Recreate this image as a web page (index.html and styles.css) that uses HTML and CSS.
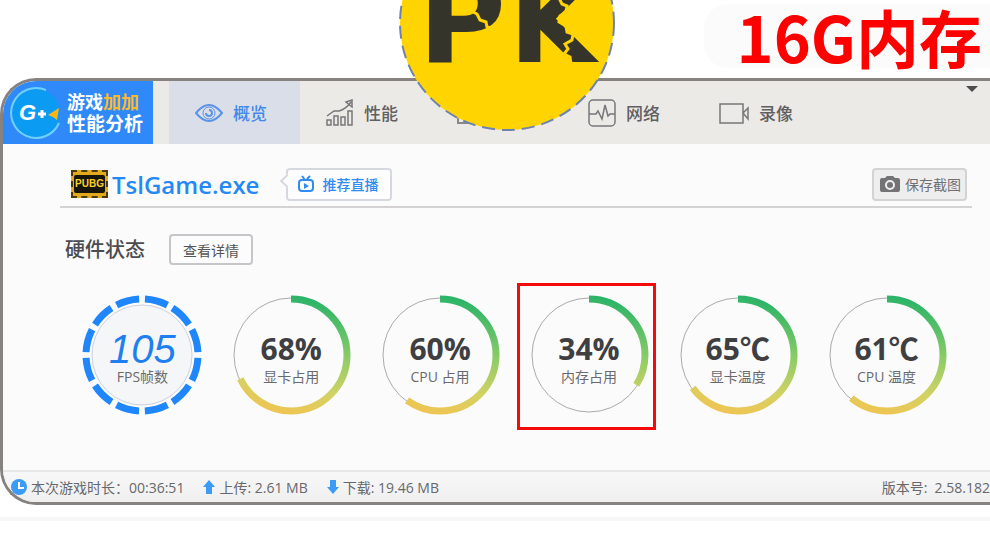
FILE: index.html
```
<!DOCTYPE html>
<html lang="zh-CN">
<head>
  <meta charset="UTF-8">
  <meta name="viewport" content="width=device-width, initial-scale=1.0">
  <title>游戏加加 性能分析</title>
  <link rel="stylesheet" href="styles.css">
</head>
<body>
  <header class="promo">
    <h1>16G内存</h1>
  </header>

  <div class="pk-badge">
    <svg viewBox="0 0 216 216" width="216" height="216">
      <circle cx="108" cy="108" r="107" fill="#ffd400"/>
      <circle cx="108" cy="108" r="107" fill="none" stroke="#6f82ad" stroke-width="2" stroke-dasharray="13 7"/>
      <text class="pk-text pk-p" x="19" y="147">P</text>
      <text class="pk-text" x="110" y="147">K</text>
      <g fill="none" stroke="#ffd400" stroke-width="3">
        <path d="M72 96l6 3 3 6 6 2 1 5 6 1 3 6"/>
        <path d="M160 83l3 6 5 2-1 6-6 4-1 6 7 4 1 6 6 2-1 6-7 4 3 5-4 5 6 3 1 8"/>
      </g>
    </svg>
  </div>

  <main class="window">
    <div class="topbar">
      <div class="brand">
        <svg width="54" height="54" viewBox="0 0 54 54">
          <circle cx="27" cy="27" r="24" fill="#0c9bf2"/>
          <path d="M37 4A25 25 0 1 0 50 37" fill="none" stroke="#6fd0fb" stroke-width="2"/>
          <text class="brand-g" x="10" y="34">G</text>
          <path d="M29 28h8M33 24v8" stroke="#fff" stroke-width="3"/>
          <path d="M39 29l11-7-2 12-4-3z" fill="#fdb515"/>
        </svg>
        <div class="brand-name">
          <div class="brand-top">游戏<span>加加</span></div>
          <div class="brand-bottom">性能分析</div>
        </div>
      </div>
      <nav class="tabs">
        <button class="tab active">
          <svg width="28" height="28" viewBox="0 0 28 28" fill="none" stroke="#5b93e6" stroke-width="2">
            <path d="M1 14Q14-2 27 14Q14 30 1 14z"/>
            <circle cx="14" cy="14" r="6" stroke-width="1"/>
            <path d="M14 11a3 3 0 1 1-3 3"/>
          </svg>
          概览
        </button>
        <button class="tab">
          <svg width="28" height="28" viewBox="0 0 28 28" fill="none" stroke="#77777a" stroke-width="1.500">
            <path d="M1 17L8 12H13Q20 10 25 3M20 3l6-2v7z"/>
            <path d="M1 21h4v5H1zM8 17h4v9H8zM15 18h4v8h-4zM22 12h4v14h-4z"/>
          </svg>
          性能
        </button>
        <button class="tab" aria-label="more">
          <svg width="28" height="28" viewBox="0 0 28 28" fill="none" stroke="#88888a" stroke-width="2">
            <path d="M1 5h26v19H1z"/>
          </svg>
        </button>
        <button class="tab">
          <svg width="28" height="28" viewBox="0 0 28 28" fill="none" stroke="#77777a" stroke-width="1.500">
            <rect x="1" y="1" width="26" height="26" rx="4"/>
            <path d="M1 15h7l2-3 4 8 3-14 3 11 2-2h5"/>
          </svg>
          网络
        </button>
        <button class="tab">
          <svg width="30" height="28" viewBox="0 0 30 28" fill="none" stroke="#77777a" stroke-width="1.500">
            <path d="M1 5h23v19H1zM24 14l5-5v11z"/>
          </svg>
          录像
        </button>
      </nav>
      <span class="caret"></span>
    </div>

    <div class="content">
      <section class="game">
        <span class="game-icon"><b>PUBG</b></span>
        <h2>TslGame.exe</h2>
        <button class="live">
          <svg width="16" height="18" viewBox="0 0 16 18" fill="none" stroke="#2f8cf0" stroke-width="2">
            <rect x="1" y="5" width="14" height="11" rx="3"/>
            <path d="M4 1l3 4M12 1L9 4"/>
            <path d="M6 8l5 3-5 3z" fill="#2f8cf0" stroke="none"/>
          </svg>
          推荐直播
        </button>
        <button class="save">
          <svg width="20" height="16" viewBox="0 0 20 16">
            <path d="M2 2h3l2-2h6l2 2h3q2 0 2 2v10q0 2-2 2H2q-2 0-2-2V4q0-2 2-2z" fill="#737376"/>
            <circle cx="10" cy="9" r="4" fill="#737376" stroke="#eee" stroke-width="2"/>
          </svg>
          保存截图
        </button>
      </section>

      <section class="status">
        <h3>硬件状态</h3>
        <button>查看详情</button>
      </section>

      <section class="gauges" id="gauges">
        <div class="gauge fps">
          <svg viewBox="0 0 120 120" width="120" height="120">
            <circle cx="60" cy="60" r="50" fill="#f5f6f8" stroke="#cdd0de"/>
            <circle cx="60" cy="60" r="56" fill="none" stroke="#1f87fb" stroke-width="7" pathLength="120" stroke-dasharray="8 2" transform="rotate(-87 60 60)"/>
          </svg>
          <strong>105</strong>
          <span>FPS帧数</span>
        </div>
      </section>
    </div>

    <footer class="statusbar">
      <svg width="16" height="16" viewBox="0 0 16 16">
        <circle cx="8" cy="8" r="8" fill="#3b9bf5"/>
        <path d="M8 3v6h5" fill="none" stroke="#fff" stroke-width="2"/>
      </svg>
      <span class="played">本次游戏时长：00:36:51</span>
      <svg width="12" height="16" viewBox="0 0 12 16"><path d="M6 1l6 7H9v7H3V8H0z" fill="#3b9bf5"/></svg>
      <span class="upload">上传: 2.61 MB</span>
      <svg width="12" height="16" viewBox="0 0 12 16"><path d="M6 15l6-7H9V1H3v7H0z" fill="#3b9bf5"/></svg>
      <span>下载: 19.46 MB</span>
      <span class="version">版本号:&nbsp; 2.58.182</span>
    </footer>
  </main>
  <div class="divider"></div>

  <svg width="0" height="0" class="defs">
    <defs>
      <linearGradient id="heat" gradientUnits="userSpaceOnUse" x1="70" y1="0" x2="45" y2="120">
        <stop offset="0" stop-color="#27b368"/>
        <stop offset="0.45" stop-color="#92cd66"/>
        <stop offset="0.75" stop-color="#d3d264"/>
        <stop offset="1" stop-color="#f2c350"/>
      </linearGradient>
    </defs>
  </svg>

  <script>
    const gauges = [
      { value: 68, unit: '%', label: '显卡占用' },
      { value: 60, unit: '%', label: 'CPU 占用' },
      { value: 34, unit: '%', label: '内存占用', marked: true },
      { value: 65, unit: '℃', label: '显卡温度' },
      { value: 61, unit: '℃', label: 'CPU 温度' }
    ];

    const container = document.getElementById('gauges');
    gauges.forEach(item => {
      const div = document.createElement('div');
      div.className = item.marked ? 'gauge marked' : 'gauge';
      // the arc starts at 12 o'clock and runs clockwise
      div.innerHTML = `
        <svg viewBox="0 0 120 120" width="120" height="120" fill="none">
          <circle cx="60" cy="60" r="57" stroke="#aaa"/>
          <path d="M60 4A56 56 0 0 1 60 116A56 56 0 0 1 60 4" stroke="url(#heat)" stroke-width="7" pathLength="100" stroke-dasharray="${item.value} 100"/>
        </svg>
        <strong>${item.value}${item.unit}</strong>
        <span>${item.label}</span>
      `;
      container.appendChild(div);
    });
  </script>
</body>
</html>
```
FILE: styles.css
```
* {
  box-sizing: border-box;
}
body {
  margin: 0;
  position: relative;
  overflow-x: hidden;
  background: #fff;
  color: #555;
  font-family: "Open Sans", "Noto Sans CJK SC", sans-serif;
  font-size: 14px;
}
h1, h2, h3 {
  margin: 0;
}
button {
  font: inherit;
  color: inherit;
  white-space: nowrap;
}
svg {
  flex: none;
}
.promo {
  display: flex;
  justify-content: flex-end;
  padding: 4px 0 10px;
}
.promo h1 {
  padding: 0 8px 0 32px;
  border-radius: 24px 0 0 24px;
  background: #fbfbfb;
  color: #fe0000;
  font-family: "Noto Sans CJK SC", sans-serif;
  font-size: 63px;
  line-height: 64px;
}
.pk-badge {
  position: absolute;
  z-index: 2;
  top: -85px;
  left: 51%;
  margin-left: -106px;
}
.pk-badge svg {
  display: block;
}
.pk-text {
  font-family: "DejaVu Sans", sans-serif;
  font-size: 112px;
  font-weight: bold;
  fill: #34342a;
}
.pk-p {
  font-size: 120px;
}
.window {
  border: 3px solid #85827f;
  border-right: 0;
  border-radius: 36px 0 0 36px;
  background: #fbfbfb;
  overflow: hidden;
}
.topbar {
  display: flex;
  position: relative;
  height: 63px;
  background: #eceae6;
}
.brand {
  display: flex;
  align-items: center;
  gap: 4px;
  width: 150px;
  padding-left: 6px;
  background: #2f89f8;
  color: #fff;
  font-weight: bold;
}
.brand-g {
  font-family: "Liberation Sans", sans-serif;
  font-size: 22px;
  font-style: italic;
  fill: #fff;
}
.brand-top {
  font-size: 18px;
  line-height: 22px;
}
.brand-top span {
  color: #fdb92c;
}
.brand-bottom {
  font-size: 19px;
  line-height: 22px;
}
.tabs {
  display: flex;
  margin-left: 16px;
}
.tab {
  display: flex;
  align-items: center;
  gap: 10px;
  width: 131px;
  padding: 0 0 0 26px;
  border: 0;
  background: none;
  color: #606062;
  font-size: 17px;
  font-weight: 500;
}
.tab.active {
  background: #d9dee8;
  color: #4188e8;
}
.caret {
  position: absolute;
  top: 5px;
  right: 12px;
  border: 6px solid transparent;
  border-top-color: #4c4c4c;
  border-bottom: 0;
}
.content {
  padding: 18px 18px 40px 57px;
}
.game {
  display: flex;
  align-items: center;
  height: 46px;
  padding: 0 5px 0 11px;
  border-bottom: 2px solid #d5d2d4;
}
.game-icon {
  display: flex;
  align-items: center;
  justify-content: center;
  width: 37px;
  height: 28px;
  border: 2px dashed #4a3a0c;
  background: #e3a91c;
}
.game-icon b {
  padding: 0 1px;
  border-radius: 2px;
  background: #17140c;
  color: #f8d12c;
  font-family: "Liberation Sans", sans-serif;
  font-size: 10px;
  line-height: 18px;
}
.game h2 {
  margin-left: 4px;
  color: #2389f5;
  font-size: 24px;
  font-weight: 600;
}
.live {
  display: flex;
  align-items: center;
  gap: 8px;
  position: relative;
  height: 33px;
  margin-left: 27px;
  padding: 0 12px 0 10px;
  border: 2px solid #d6d8e0;
  border-radius: 4px;
  background: #fdfdfd;
  color: #2f8cf0;
  font-weight: 500;
}
.live::before {
  content: "";
  position: absolute;
  top: 6px;
  left: -6px;
  width: 8px;
  height: 8px;
  border: solid #d6d8e0;
  border-width: 0 0 2px 2px;
  background: #fdfdfd;
  transform: rotate(45deg);
}
.save {
  display: flex;
  align-items: center;
  gap: 5px;
  height: 33px;
  margin-left: auto;
  padding: 0 4px 0 6px;
  border: 2px solid #d3d3d6;
  border-radius: 4px;
  background: #eeeeef;
  color: #707074;
}
.status {
  display: flex;
  align-items: center;
  gap: 24px;
  margin-top: 26px;
  padding-left: 5px;
}
.status h3 {
  color: #4c4c50;
  font-size: 20px;
  font-weight: 500;
  line-height: 30px;
}
.status button {
  height: 31px;
  padding: 0 12px;
  border: 2px solid #c6c6ca;
  border-radius: 4px;
  background: #fcfcfc;
}
.gauges {
  display: grid;
  grid-template-columns: repeat(6, 1fr);
  margin: 18px 11px 0 8px;
}
.gauge {
  display: grid;
  position: relative;
  grid-template-rows: 36px 36px 20px 28px;
  justify-items: center;
  padding: 12px 0 15px;
}
.gauge svg {
  grid-area: 1 / 1 / 5 / 2;
}
.gauge strong {
  grid-area: 2 / 1;
  color: #3f3f42;
  font-size: 30px;
  line-height: 36px;
}
.gauge span {
  grid-area: 3 / 1;
  color: #6a6a6e;
  line-height: 20px;
}
.fps strong {
  color: #1f7ff0;
  font-family: "Liberation Sans", sans-serif;
  font-size: 40px;
  font-style: italic;
  font-weight: normal;
}
.marked::after {
  content: "";
  position: absolute;
  inset: 0 7px 0 3px;
  border: 3px solid #f30b0b;
}
.statusbar {
  display: flex;
  align-items: center;
  height: 32px;
  padding-left: 8px;
  border-top: 2px solid #e6e8e8;
  background: linear-gradient(#f8f8f8, #efefef);
  color: #68686c;
  white-space: nowrap;
}
.statusbar span {
  margin-left: 4px;
}
.statusbar .played,
.statusbar .upload {
  margin-right: 19px;
}
.statusbar .version {
  margin-left: auto;
}
.divider {
  height: 4px;
  margin-top: 12px;
  background: #f7f7f7;
}
.defs {
  position: absolute;
}
```
